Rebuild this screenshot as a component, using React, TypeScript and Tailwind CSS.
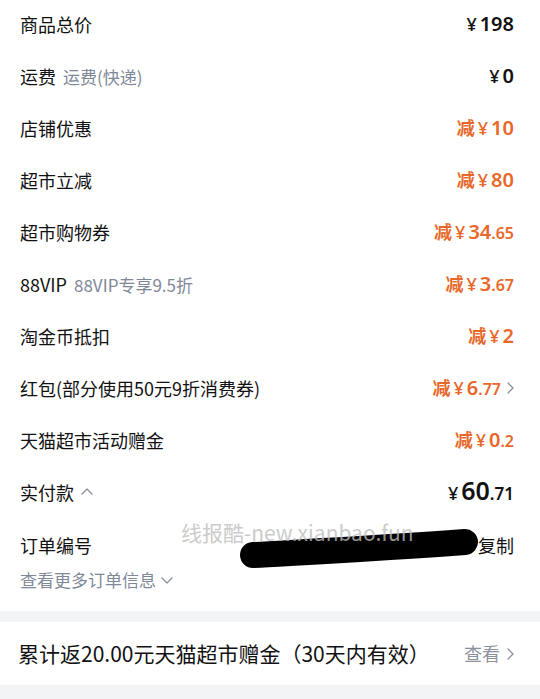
import React from 'react'

const cjk = "font-['Noto_Sans_CJK_SC','Noto_Sans',sans-serif]"
const num = "font-['Noto_Sans','Noto_Sans_CJK_SC',sans-serif]"

type AmountProps = { minus?: boolean; int: string; dec?: string; big?: boolean }

const Amount = ({ minus, int, dec, big }: AmountProps) => {
    const color = minus ? 'text-[#e8682a]' : 'text-[#111111]'
    return (
        <div className={`flex items-baseline ${color}`}>
            {minus && <span className={`${cjk} font-semibold text-[18px] mr-[3px]`}>减</span>}
            <span className={`${num} font-medium text-[18px] mr-[3px]`}>¥</span>
            <span className={`${num} font-semibold ${big ? 'text-[25px]' : 'text-[20px]'} leading-none`}>{int}</span>
            {dec && <span className={`${num} font-semibold ${big ? 'text-[17px]' : 'text-[16px]'} leading-none`}>{dec}</span>}
        </div>
    )
}

const Chevron = ({ dir, className }: { dir: 'right' | 'up' | 'down'; className?: string }) => {
    const d = dir === 'right' ? 'M2 1 L7 6 L2 11' : dir === 'up' ? 'M1 8 L6 3 L11 8' : 'M1 4 L6 9 L11 4'
    const size = dir === 'right' ? { w: 9, h: 12 } : { w: 12, h: 12 }
    return (
        <svg width={size.w} height={size.h} viewBox={`0 0 ${size.w} ${size.h}`} className={className}>
            <path d={d} fill="none" stroke="#8a919c" strokeWidth="1.3" strokeLinecap="round" strokeLinejoin="round" />
        </svg>
    )
}

type Row = { label: string; sub?: string; minus?: boolean; int: string; dec?: string; arrow?: boolean }

const rows: Row[] = [
    { label: '商品总价', int: '198' },
    { label: '运费', sub: '运费(快递)', int: '0' },
    { label: '店铺优惠', minus: true, int: '10' },
    { label: '超市立减', minus: true, int: '80' },
    { label: '超市购物券', minus: true, int: '34', dec: '.65' },
    { label: '88VIP', sub: '88VIP专享9.5折', minus: true, int: '3', dec: '.67' },
    { label: '淘金币抵扣', minus: true, int: '2' },
    { label: '红包(部分使用50元9折消费券)', minus: true, int: '6', dec: '.77', arrow: true },
    { label: '天猫超市活动赠金', minus: true, int: '0', dec: '.2' },
]

const App = () => {
    return (
        <div className={`w-[540px] h-[699px] overflow-hidden bg-white ${cjk}`}>
            {/* price rows */}
            <div className="pl-5 pr-[26px] -mt-[2px]">
                {rows.map((row, index) => (
                    <div key={index} className="h-[52px] flex items-center justify-between">
                        <div className="flex items-baseline">
                            <span className="text-[18px] text-[#111111]">{row.label}</span>
                            {row.sub && <span className="ml-[7px] text-[17px] text-[#7f8898]">{row.sub}</span>}
                        </div>
                        <div className="flex items-center">
                            <Amount minus={row.minus} int={row.int} dec={row.dec} />
                            {row.arrow && <Chevron dir="right" className="ml-[5px] -mr-[1px]" />}
                        </div>
                    </div>
                ))}
                <div className="h-[52px] flex items-center justify-between">
                    <div className="flex items-center">
                        <span className="text-[18px] text-[#111111]">实付款</span>
                        <Chevron dir="up" className="ml-[7px]" />
                    </div>
                    <Amount int="60" dec=".71" big />
                </div>
            </div>

            {/* order number */}
            <div className="relative pl-5 pr-[26px] pb-[13px]">
                <div className="h-[39px] flex items-end justify-between">
                    <span className="text-[18px] text-[#111111] leading-[24px]">订单编号</span>
                    <span className="text-[18px] text-[#111111] leading-[24px]">复制</span>
                </div>
                <div className="h-[36px] mt-[5px] flex items-center">
                    <span className="text-[17px] text-[#7f8898]">查看更多订单信息</span>
                    <Chevron dir="down" className="ml-[5px]" />
                </div>
                <svg className="absolute left-[235px] top-[10px]" width="250" height="50" viewBox="0 0 250 50">
                    <path d="M18 27 C 70 24, 150 20, 230 14" fill="none" stroke="#000" strokeWidth="26" strokeLinecap="round" />
                </svg>
                <span className="absolute left-[181px] top-[-1px] text-[21px] leading-[30px] text-[#bdbdbd]/80">线报酷-new.xianbao.fun</span>
            </div>

            <div className="h-[11px] bg-[#f3f4f6]" />

            {/* reward */}
            <div className="h-[63px] pl-5 pr-[26px] flex items-center justify-between">
                <span className="text-[21px] text-[#111111] -ml-[2px]">累计返20.00元天猫超市赠金（30天内有效）</span>
                <div className="flex items-center">
                    <span className="text-[18px] text-[#8a919c]">查看</span>
                    <Chevron dir="right" className="ml-[6px] -mr-[1px]" />
                </div>
            </div>

            <div className="h-[20px] bg-[#f3f4f6]" />
        </div>
    )
}

export default App
